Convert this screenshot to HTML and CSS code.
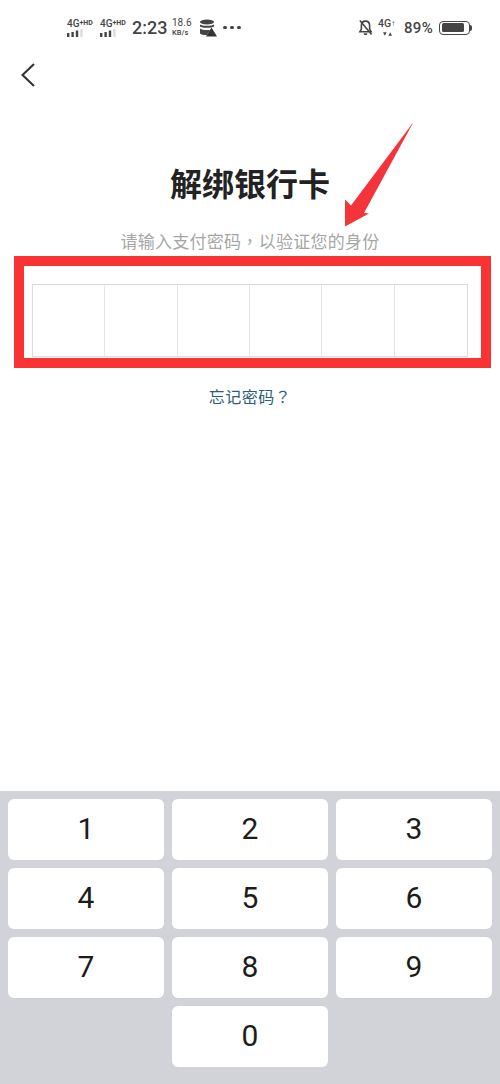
FILE: index.html
```html
<!DOCTYPE html>
<html lang="zh-CN">
<head>
<meta charset="utf-8">
<title>解绑银行卡</title>
<link rel="stylesheet" href="styles.css">
</head>
<body>
<div class="page">
  <div class="status">
    <div class="net"><span class="net-label">4G<sup>+HD</sup></span><svg class="bars" viewBox="0 0 20 8"><rect x="0" y="4" width="2.400" height="4"/><rect x="4.400" y="3" width="2.400" height="5"/><rect x="8.800" y="1.500" width="2.400" height="6.500"/><rect x="13.200" y="0" width="2.400" height="8" class="dim"/></svg></div>
    <div class="net"><span class="net-label">4G<sup>+HD</sup></span><svg class="bars" viewBox="0 0 20 8"><rect x="0" y="4" width="2.400" height="4"/><rect x="4.400" y="3" width="2.400" height="5"/><rect x="8.800" y="1.500" width="2.400" height="6.500"/><rect x="13.200" y="0" width="2.400" height="8" class="dim"/></svg></div>
    <span class="time">2:23</span>
    <div class="speed"><span>18.6</span><span class="unit">KB/s</span></div>
    <svg class="data" viewBox="0 0 18 18"><ellipse cx="8" cy="3" rx="7" ry="2.400" fill="#444"/><path d="M1 5.500c2 1.800 12 1.800 14 0v2c-2 1.800-12 1.800-14 0zM1 9.500c2 1.800 8 1.800 10 1.200L8 16c-4 0-6-.6-7-1.600z" fill="#444"/><path d="M12.500 8.500 18 17.500H7z" fill="#333"/></svg>
    <div class="dots"><i></i><i></i><i></i></div>
    <div class="status-right">
      <svg class="bell" viewBox="0 0 16 18"><path d="M8 2.200c-3 0-4.400 2.200-4.400 5v3.400L2 13.600h12l-1.600-3V7.200c0-2.800-1.400-5-4.400-5z" fill="none" stroke="#444" stroke-width="1.700"/><path d="M6 15.200a2 2 0 0 0 4 0z" fill="#444"/><path d="M2 1.500 14.500 16.500" stroke="#444" stroke-width="1.700"/></svg>
      <div class="net4g"><span>4G<sup>↑</sup></span><svg class="tri" viewBox="0 0 10 4"><path d="M0 0h4L2 4zM6 4h4L8 0z" fill="#444"/></svg></div>
      <span class="pct">89%</span>
      <div class="battery"><div class="battery-fill"></div></div><div class="battery-cap"></div>
    </div>
  </div>
  <div class="nav">
    <svg class="back" viewBox="0 0 16 26"><path d="M14 2 2.500 13 14 24" fill="none" stroke="#333" stroke-width="2.100"/></svg>
  </div>
  <main class="content">
    <h1 class="title">解绑银行卡</h1>
    <p class="sub">请输入支付密码<span class="punct" lang="zh-TW">，</span>以验证您的身份</p>
    <div class="pin">
      <div class="cell"></div><div class="cell"></div><div class="cell"></div><div class="cell"></div><div class="cell"></div><div class="cell"></div>
    </div>
    <a class="forgot">忘记密码<span class="punct" lang="zh-TW">？</span></a>
  </main>
  <div class="keyboard">
    <div class="key">1</div><div class="key">2</div><div class="key">3</div>
    <div class="key">4</div><div class="key">5</div><div class="key">6</div>
    <div class="key">7</div><div class="key">8</div><div class="key">9</div>
    <div class="key zero">0</div>
  </div>
  <div class="mark-box"></div>
  <svg class="mark-arrow" viewBox="0 0 500 300"><path d="M413.500 122 L364 213 L369 213.500 L345 226.500 L345 199.500 L351 205.500 Z" fill="#f5333a"/></svg>
</div>
</body>
</html>
```
FILE: styles.css
```css
* { box-sizing: border-box; }
html, body { margin: 0; padding: 0; }
body { background: #fff; font-family: "Noto Sans CJK SC", "Liberation Sans", sans-serif; }
.page { position: relative; width: 500px; height: 1084px; display: flex; flex-direction: column; overflow: hidden; background: #fff; }

.status { height: 50px; flex: none; display: flex; align-items: center; padding: 5px 28px 0 67px; color: #444; font-family: Roboto, "Liberation Sans", sans-serif; }
.net { width: 33px; display: flex; flex-direction: column; gap: 1px; }
.net-label { font-size: 10px; line-height: 9px; font-weight: 500; white-space: nowrap; }
.net-label sup { font-size: 7px; font-weight: 700; line-height: 0; vertical-align: 2px; }
.bars { width: 20px; height: 8px; fill: #444; display: block; }
.bars .dim { fill: #ddd; }
.time { margin-left: -1px; font-size: 18px; font-weight: 500; line-height: 20px; width: 41px; }
.speed { display: flex; flex-direction: column; font-size: 9px; line-height: 10px; margin-left: -1px; width: 27px; }
.speed span:first-child { font-size: 10px; }
.speed .unit { font-size: 7.500px; font-weight: 500; }
.data { width: 18px; height: 18px; }
.dots { display: flex; gap: 3.500px; margin-left: 6px; }
.dots i { width: 3.500px; height: 3.500px; border-radius: 50%; background: #444; }
.status-right { margin-left: auto; display: flex; align-items: center; }
.bell { width: 15px; height: 17px; margin-right: 2px; }
.net4g { width: 26px; margin-left: 3px; display: flex; flex-direction: column; align-items: flex-start; font-size: 10.500px; line-height: 10px; font-weight: 500; }
.net4g span { white-space: nowrap; }
.net4g sup { font-size: 8px; line-height: 0; vertical-align: 1px; }
.tri { width: 9px; height: 4px; margin: 3px 0 0 5px; }
.pct { font-size: 15px; font-weight: 500; width: 35px; letter-spacing: .3px; }
.battery { width: 31px; height: 14px; border: 1.500px solid #444; border-radius: 4px; padding: 1.500px; }
.battery-fill { width: 85%; height: 100%; background: #444; border-radius: 1.500px; }
.battery-cap { width: 2px; height: 6px; background: #444; border-radius: 0 2px 2px 0; }

.nav { flex: none; height: 50px; padding: 12px 0 0 20px; }
.back { width: 16px; height: 26px; display: block; }

.content { flex: 1; display: flex; flex-direction: column; align-items: center; min-height: 0; }
.title { margin: 62px 0 0; font-size: 32px; line-height: 40px; font-weight: 700; color: #222; }
.sub { margin: 27px 0 0; font-size: 17px; line-height: 24px; color: #a6a6a6; letter-spacing: .27px; white-space: nowrap; }
.punct { font-family: "Noto Sans CJK TC", sans-serif; }
.pin { margin-top: 31px; width: 436px; height: 73px; display: grid; grid-template-columns: repeat(6, 1fr); border: 1px solid #dcdcdc; }
.cell { border-right: 1px solid #e6e6e6; }
.cell:last-child { border-right: 0; }
.forgot { margin-top: 28px; font-size: 16px; line-height: 22px; color: #2c5d7c; letter-spacing: .5px; }

.keyboard { flex: none; height: 293px; background: #d2d3d8; padding: 8px; display: grid; grid-template-columns: repeat(3, 156px); grid-auto-rows: 61px; gap: 8px; align-content: start; }
.key { background: #fff; border-radius: 6px; display: flex; align-items: center; justify-content: center; padding-bottom: 2px; font-family: Roboto, "Liberation Sans", sans-serif; font-size: 30px; color: #1c1c1c; }
.zero { grid-column: 2; }

.mark-box { position: absolute; left: 14px; top: 256px; width: 477px; height: 112px; border: 10px solid #f93234; }
.mark-arrow { position: absolute; left: 0; top: 0; width: 500px; height: 300px; }
```
